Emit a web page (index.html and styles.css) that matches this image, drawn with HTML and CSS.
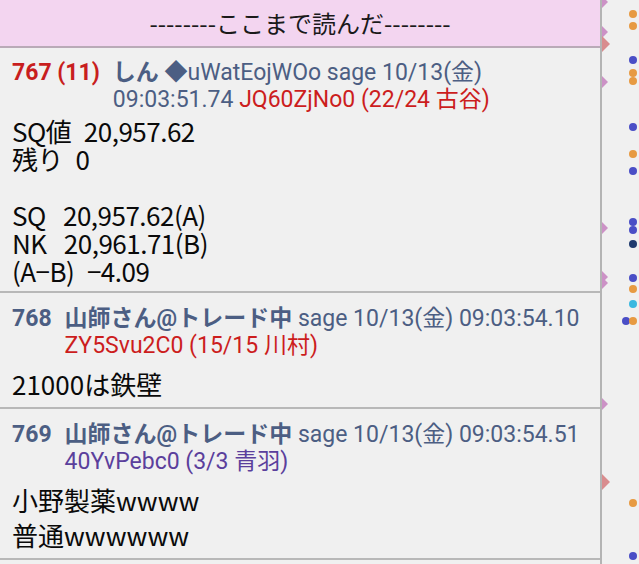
FILE: index.html
```html
<!DOCTYPE html>
<html lang="ja">
<head>
  <meta charset="UTF-8" />
  <title>スレッド</title>
  <meta name="viewport" content="width=device-width, initial-scale=1.0"/>
  <link rel="stylesheet" href="styles.css">
</head>
<body>

<div class="screen">
  <main class="thread">
    <div class="readmark">--------ここまで読んだ--------</div>

    <article class="res">
      <div class="res-head">
        <span class="num mine">767 (11)</span>
        <div class="meta">
          <div><b>しん</b> ◆uWatEojWOo sage 10/13(金)</div>
          <div>09:03:51.74 <span class="id red">JQ60ZjNo0 (22/24 古谷)</span></div>
        </div>
      </div>
      <div class="res-body tight">SQ値&ensp;20,957.62<br>残り&ensp;0<br><br>SQ&ensp;&thinsp;20,957.62(A)<br>NK&ensp;&thinsp;20,961.71(B)<br>(A−B)&ensp;−4.09</div>
    </article>

    <article class="res">
      <div class="res-head">
        <span class="num">768</span>
        <div class="meta">
          <div><b>山師さん@トレード中</b> sage 10/13(金) 09:03:54.10</div>
          <div><span class="id red">ZY5Svu2C0 (15/15 川村)</span></div>
        </div>
      </div>
      <div class="res-body">21000は鉄壁</div>
    </article>

    <article class="res">
      <div class="res-head">
        <span class="num">769</span>
        <div class="meta">
          <div><b>山師さん@トレード中</b> sage 10/13(金) 09:03:54.51</div>
          <div><span class="id purple">40YvPebc0 (3/3 青羽)</span></div>
        </div>
      </div>
      <div class="res-body">小野製薬wwww<br>普通wwwwww</div>
    </article>
  </main>

  <aside class="rail">
    <span class="tri" style="top:-4px"></span>
    <span class="tri" style="top:26px"></span>
    <span class="tri big" style="top:36px"></span>
    <span class="tri" style="top:76px"></span>
    <span class="tri" style="top:222px"></span>
    <span class="tri" style="top:271px"></span>
    <span class="tri" style="top:277px"></span>
    <span class="tri" style="top:398px"></span>
    <span class="tri big" style="top:474px"></span>

    <span class="dot orange" style="top:10px"></span>
    <span class="dot orange" style="top:22px"></span>
    <span class="dot blue" style="top:56px"></span>
    <span class="dot orange" style="top:69px"></span>
    <span class="dot orange" style="top:77px"></span>
    <span class="dot blue" style="top:123px"></span>
    <span class="dot orange" style="top:150px"></span>
    <span class="dot blue" style="top:167px"></span>
    <span class="dot blue" style="top:218px"></span>
    <span class="dot blue" style="top:226px"></span>
    <span class="dot navy" style="top:240px"></span>
    <span class="dot blue" style="top:274px"></span>
    <span class="dot orange" style="top:285px"></span>
    <span class="dot cyan" style="top:300px"></span>
    <span class="dot blue left" style="top:317px"></span>
    <span class="dot orange" style="top:317px"></span>
    <span class="dot orange" style="top:499px"></span>
    <span class="dot blue" style="top:552px"></span>
  </aside>
</div>

</body>
</html>
```

FILE: styles.css
```css
body { margin: 0; background: #f0f0f0; font-family: Roboto, "Noto Sans CJK JP", sans-serif; }
.screen { display: flex; height: 564px; overflow: hidden; }
.thread { width: 600px; flex: none; border-right: 2px solid #b4b4b4; }
.readmark { height: 46px; line-height: 46px; background: #f3d5f0; border-bottom: 2px solid #b9aab7; text-align: center; font-family: "Noto Sans CJK JP", sans-serif; font-size: 24px; color: #1a1a1a; }

.res { padding: 11px 0 6px 12px; border-bottom: 2px solid #b8b8b8; }
.res + .res { padding-top: 12px; }
.res-head { display: flex; gap: 13px; font-size: 23px; line-height: 27px; color: #4c5e83; white-space: nowrap; }
.res-head b { font-weight: bold; }
.num { font-weight: bold; }
.num.mine { color: #c81e1e; }
.red { color: #cc1d1d; }
.purple { color: #5b3f9c; }
.res-body { margin-top: 7px; font-family: "Noto Sans CJK JP", sans-serif; font-size: 26px; line-height: 35px; color: #0a0a0a; }
.res-body.tight { margin-top: 4px; line-height: 28px; letter-spacing: -0.5px; }

.rail { position: relative; flex: 1; }
.tri { position: absolute; left: 0; width: 0; height: 0; border-top: 6px solid transparent; border-bottom: 6px solid transparent; border-left: 6px solid #cc92c6; }
.tri.big { border-top-width: 8px; border-bottom-width: 8px; border-left: 8px solid #d98c8e; }
.dot { position: absolute; left: 27px; width: 8px; height: 8px; border-radius: 50%; }
.dot.left { left: 20px; }
.orange { background: #e79a42; }
.blue { background: #4a4ec6; }
.navy { background: #1f3a6e; }
.cyan { background: #3bb8e0; }
```
